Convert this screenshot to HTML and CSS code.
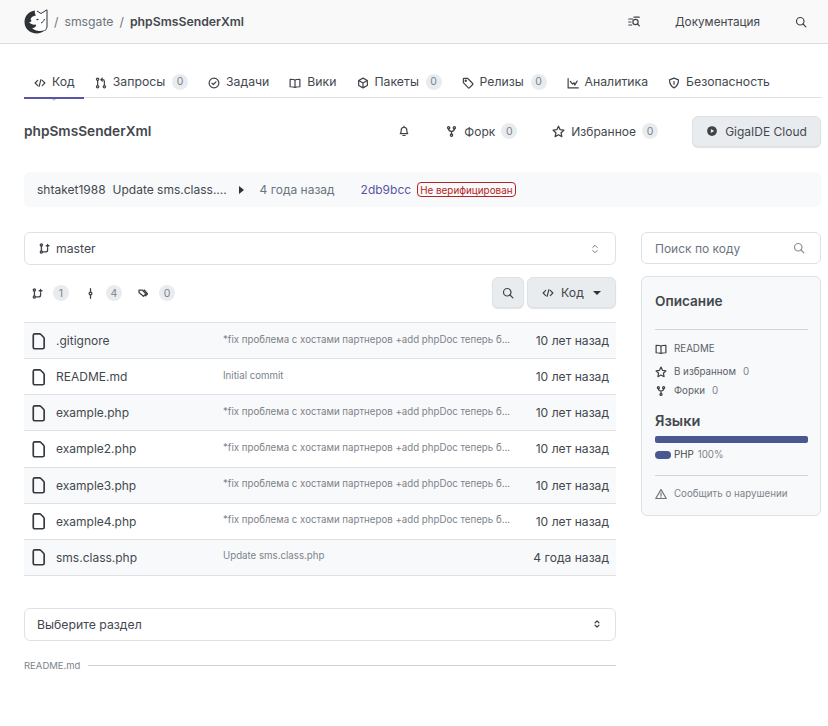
FILE: index.html
```html
<!DOCTYPE html>
<html>

<head>
    <title>phpSmsSenderXml</title>
    <meta name="viewport" content="width=device-width, initial-scale=1">
    <link rel="stylesheet" href="styles.css">
</head>

<body>
    <svg class="sprite">
        <symbol id="i-code" viewBox="0 0 16 16"><path d="M5 4.500 1.500 8 5 11.500M11 4.500 14.500 8 11 11.500M9.200 3.500 6.800 12.500"/></symbol>
        <symbol id="i-pull" viewBox="0 0 16 16"><circle cx="3.500" cy="3" r="1.600"/><circle cx="3.500" cy="13" r="1.600"/><circle cx="12.500" cy="13" r="1.600"/><path d="M3.500 4.600v6.800M12.500 11.400V6c0-1.500-.8-2.500-2.500-2.500H8M9.800 1.500 7.800 3.500l2 2"/></symbol>
        <symbol id="i-check" viewBox="0 0 16 16"><circle cx="8" cy="8" r="6.500"/><path d="M5.300 8.300 7.200 10l3.400-3.600"/></symbol>
        <symbol id="i-book" viewBox="0 0 16 16"><path d="M8 4.200C7 3.200 5.500 3 1.500 3v10c4 0 5.500.2 6.500 1 1-.8 2.500-1 6.500-1V3c-4 0-5.500.2-6.500 1.200ZM8 4.200V14"/></symbol>
        <symbol id="i-box" viewBox="0 0 16 16"><path d="M8 1.500 13.800 4.700v6.600L8 14.500l-5.800-3.200V4.700ZM2.400 4.800 8 8l5.600-3.200M8 8v6.300"/></symbol>
        <symbol id="i-tag" viewBox="0 0 16 16"><path d="M1.800 2.600c0-.5.4-.9.9-.9h4.600l7 7c.4.4.4 1 0 1.300l-4.500 4.500c-.4.4-1 .4-1.300 0l-6.700-7Z"/><circle cx="5" cy="5" r=".8"/></symbol>
        <symbol id="i-chart" viewBox="0 0 16 16"><path d="M1.500 2v12.500H15M4.500 6l3 3.500 2-1.800.8 2.800M13.500 5.500l-3.200 5.300"/></symbol>
        <symbol id="i-shield" viewBox="0 0 16 16"><path d="M8 1.500 14 3.800c0 5.200-2 8.800-6 10.700-4-1.900-6-5.500-6-10.700Z"/><path d="M8 6v3.500"/></symbol>
        <symbol id="i-bell" viewBox="0 0 16 16"><path d="M3 11.500c1-1 1.200-2.200 1.200-4.300C4.200 4.800 5.800 3 8 3s3.800 1.800 3.800 4.200c0 2.100.2 3.300 1.200 4.300ZM8 1.500V3M6.500 14h3"/></symbol>
        <symbol id="i-fork" viewBox="0 0 16 16"><circle cx="4.500" cy="3.500" r="1.400"/><circle cx="11.500" cy="3.500" r="1.400"/><circle cx="8" cy="12.500" r="1.400"/><path d="M4.500 5c0 2 1 2.800 3.500 3 2.500-.2 3.500-1 3.500-3M8 8v3"/></symbol>
        <symbol id="i-star" viewBox="0 0 16 16"><path d="m8 1.500 2 4.300 4.600.6-3.400 3.200.9 4.700L8 12l-4.100 2.300.9-4.700L1.400 6.400 6 5.800Z"/></symbol>
        <symbol id="i-search" viewBox="0 0 16 16"><circle cx="7" cy="7" r="5"/><path d="m10.700 10.700 3.800 3.800"/></symbol>
        <symbol id="i-branch" viewBox="0 0 16 16"><circle cx="3.500" cy="3" r="1.600"/><circle cx="3.500" cy="13" r="1.600"/><path d="M3.500 4.600v6.800M6.500 13h3c2 0 3-1 3-3V8M12.500 2v4M10.500 4h4"/></symbol>
        <symbol id="i-commit" viewBox="0 0 16 16"><circle cx="8" cy="8" r="2"/><path d="M8 1v5M8 10v5"/></symbol>
        <symbol id="i-tags" viewBox="0 0 16 16"><path d="M1.500 3h4.500l5.500 5.500-3.500 3.500-6.500-5.500ZM9 3l5 5.500-3 3"/></symbol>
        <symbol id="i-updown" viewBox="0 0 16 16"><path d="M5 6 8 3l3 3M5 10l3 3 3-3"/></symbol>
        <symbol id="i-file" viewBox="0 0 16 16"><path d="M2.900 3c0-.8.6-1.300 1.300-1.300h4.300c.5 0 .9.2 1.200.5l2.400 2.500c.3.3.5.7.5 1.200v7.700c0 .8-.6 1.300-1.300 1.300H4.200c-.7 0-1.300-.5-1.300-1.300Z"/></symbol>
        <symbol id="i-warn" viewBox="0 0 16 16"><path d="M8 2 15 14H1ZM8 6.500v3.500M8 11.800v.4"/></symbol>
    </svg>

    <header class="topbar">
        <div class="crumbs">
            <svg class="logo" viewBox="0 0 24 25">
                <path class="logo-white" d="M12 1 17 4 23 .5V18C21 23 15 25 11 24.500 5 24 .5 19 .5 12 .5 6 5 2 12 1Z"/>
                <path class="logo-dark" d="M11 1.500C5 2 .5 7 .5 13 .5 19 5 24 12 24.500 16 24.500 19 23 21 21 16 23 11 22 8 19 11 19 13 17 11.500 15.500 9 16 7 15 5 13.500 7 13 8 12 7 11 6 9.500 8 7 12 6.500 11 5 10.500 3 11 1.500Z"/>
                <ellipse class="logo-dark" cx="13.500" cy="10.500" rx="1.200" ry=".8"/>
                <path class="logo-line" d="M13 2 17 4.500 23 .8V18C22.500 20 21.500 21 20.500 22M17 14c1.500-.5 3-2 3.500-4"/>
            </svg>
            <span class="sep">/</span>
            <a class="owner">smsgate</a>
            <span class="sep">/</span>
            <b class="repo-link">phpSmsSenderXml</b>
        </div>
        <div class="top-actions">
            <svg class="ic ic-small" viewBox="0 0 16 16"><path d="M1 4h5M1 8h3M1 12h4"/><circle cx="10" cy="8" r="3.500"/><path d="m12.500 10.500 2.500 2.500M8 1.500h7"/></svg>
            <span class="docs">Документация</span>
            <svg class="ic"><use href="#i-search"/></svg>
        </div>
    </header>

    <nav class="tabs">
        <a class="tab active"><svg class="ic"><use href="#i-code"/></svg>Код</a>
        <a class="tab"><svg class="ic"><use href="#i-pull"/></svg>Запросы<span class="count">0</span></a>
        <a class="tab"><svg class="ic"><use href="#i-check"/></svg>Задачи</a>
        <a class="tab"><svg class="ic"><use href="#i-book"/></svg>Вики</a>
        <a class="tab"><svg class="ic"><use href="#i-box"/></svg>Пакеты<span class="count">0</span></a>
        <a class="tab"><svg class="ic"><use href="#i-tag"/></svg>Релизы<span class="count">0</span></a>
        <a class="tab"><svg class="ic"><use href="#i-chart"/></svg>Аналитика</a>
        <a class="tab"><svg class="ic"><use href="#i-shield"/></svg>Безопасность</a>
    </nav>

    <div class="repo-head">
        <h1>phpSmsSenderXml</h1>
        <div class="repo-actions">
            <svg class="ic bell"><use href="#i-bell"/></svg>
            <span class="repo-action fork"><svg class="ic"><use href="#i-fork"/></svg>Форк<span class="count">0</span></span>
            <span class="repo-action star"><svg class="ic"><use href="#i-star"/></svg>Избранное<span class="count">0</span></span>
            <button class="btn ide"><svg class="ic play" viewBox="0 0 16 16"><circle cx="8" cy="8" r="6.500"/><path class="play-tri" d="M6.500 5.300 11 8l-4.500 2.700Z"/></svg>GigaIDE Cloud</button>
        </div>
    </div>

    <div class="commit">
        <span>shtaket1988</span>
        <span class="commit-msg">Update sms.class....</span>
        <span class="caret-right"></span>
        <span class="muted">4 года назад</span>
        <a class="sha">2db9bcc</a>
        <span class="unverified">Не верифицирован</span>
    </div>

    <div class="layout">
        <main>
            <div class="select branch">
                <span class="select-label"><svg class="ic"><use href="#i-branch"/></svg>master</span>
                <svg class="ic updown"><use href="#i-updown"/></svg>
            </div>

            <div class="toolbar">
                <div class="stats">
                    <svg class="ic"><use href="#i-branch"/></svg><span class="count">1</span>
                    <svg class="ic"><use href="#i-commit"/></svg><span class="count">4</span>
                    <svg class="ic"><use href="#i-tags"/></svg><span class="count">0</span>
                </div>
                <div class="toolbar-btns">
                    <button class="btn btn-search"><svg class="ic"><use href="#i-search"/></svg></button>
                    <button class="btn btn-code"><svg class="ic"><use href="#i-code"/></svg>Код<span class="caret-down"></span></button>
                </div>
            </div>

            <div class="files">
                <div class="file odd"><svg class="ic file-ic"><use href="#i-file"/></svg><span class="file-name">.gitignore</span><span class="file-msg">*fix проблема с хостами партнеров +add phpDoc теперь б...</span><span class="file-age">10 лет назад</span></div>
                <div class="file"><svg class="ic file-ic"><use href="#i-file"/></svg><span class="file-name">README.md</span><span class="file-msg">Initial commit</span><span class="file-age">10 лет назад</span></div>
                <div class="file odd"><svg class="ic file-ic"><use href="#i-file"/></svg><span class="file-name">example.php</span><span class="file-msg">*fix проблема с хостами партнеров +add phpDoc теперь б...</span><span class="file-age">10 лет назад</span></div>
                <div class="file"><svg class="ic file-ic"><use href="#i-file"/></svg><span class="file-name">example2.php</span><span class="file-msg">*fix проблема с хостами партнеров +add phpDoc теперь б...</span><span class="file-age">10 лет назад</span></div>
                <div class="file odd"><svg class="ic file-ic"><use href="#i-file"/></svg><span class="file-name">example3.php</span><span class="file-msg">*fix проблема с хостами партнеров +add phpDoc теперь б...</span><span class="file-age">10 лет назад</span></div>
                <div class="file"><svg class="ic file-ic"><use href="#i-file"/></svg><span class="file-name">example4.php</span><span class="file-msg">*fix проблема с хостами партнеров +add phpDoc теперь б...</span><span class="file-age">10 лет назад</span></div>
                <div class="file odd"><svg class="ic file-ic"><use href="#i-file"/></svg><span class="file-name">sms.class.php</span><span class="file-msg">Update sms.class.php</span><span class="file-age">4 года назад</span></div>
            </div>

            <div class="select section">
                <span class="select-label">Выберите раздел</span>
                <svg class="ic updown tiny"><use href="#i-updown"/></svg>
            </div>

            <div class="readme-line"><span>README.md</span></div>
        </main>

        <aside>
            <div class="code-search"><span>Поиск по коду</span><svg class="ic"><use href="#i-search"/></svg></div>
            <div class="about">
                <h2>Описание</h2>
                <hr>
                <div class="about-row readme"><svg class="ic"><use href="#i-book"/></svg>README</div>
                <div class="about-row"><svg class="ic"><use href="#i-star"/></svg>В избранном<span class="num">0</span></div>
                <div class="about-row"><svg class="ic"><use href="#i-fork"/></svg>Форки<span class="num">0</span></div>
                <h3>Языки</h3>
                <div class="lang-bar"></div>
                <div class="lang"><span class="lang-dot"></span>PHP<span class="lang-pct">100%</span></div>
                <hr class="hr-report">
                <div class="about-row report"><svg class="ic"><use href="#i-warn"/></svg>Сообщить о нарушении</div>
            </div>
        </aside>
    </div>
</body>

</html>
```

FILE: styles.css
```css
* {
    box-sizing: border-box
}

body {
    font-family: Inter, "Noto Sans", sans-serif;
    font-size: 12.25px;
    color: #43484e;
    margin: 0;
    height: 726px;
    overflow: hidden;
    background: #fff;
}

.sprite {
    display: none;
}

.ic {
    width: 14px;
    height: 14px;
    flex: none;
    fill: none;
    stroke: #3e4349;
    stroke-width: 1.6;
    stroke-linecap: round;
    stroke-linejoin: round;
}

.count {
    display: inline-flex;
    align-items: center;
    justify-content: center;
    min-width: 16px;
    height: 16px;
    border-radius: 8px;
    background: #e9ecef;
    color: #7c838a;
    font-size: 10.5px;
}

.muted {
    color: #6c757d;
}

/* top bar */
.topbar {
    height: 44px;
    padding: 0 21px 0 24px;
    display: flex;
    justify-content: space-between;
    align-items: center;
    background: #f9f9f9;
    border-bottom: 1px solid #dcdcdc;
}

.crumbs {
    display: flex;
    align-items: center;
    gap: 6px;
}

.logo {
    width: 24px;
    height: 25px;
}

.logo-white {
    fill: #fff;
}

.logo-dark {
    fill: #2e3338;
}

.logo-line {
    fill: none;
    stroke: #2e3338;
    stroke-width: 1;
}

.owner {
    color: #6c757d;
}

.sep {
    color: #6c757d;
}

.repo-link {
    font-weight: 600;
}

.top-actions {
    display: flex;
    align-items: center;
    gap: 35px;
}

.docs {
    font-size: 11.75px;
}

.top-actions .ic {
    width: 12px;
    height: 12px;
}

/* tabs */
.tabs {
    margin: 22px 6px 0 24px;
    height: 32px;
    padding-left: 10px;
    display: flex;
    gap: 20px;
    align-items: flex-start;
    border-bottom: 1px solid #dee2e6;
}

.tab {
    position: relative;
    height: 31px;
    padding-top: 8px;
    display: flex;
    align-items: flex-start;
    gap: 6px;
    line-height: 16px;
}

.tab .ic {
    width: 12px;
    height: 12px;
    margin-top: 3px;
}

.tab .count {
    margin-left: .7px;
}

.tab.active::after {
    content: "";
    position: absolute;
    left: -10px;
    right: -9px;
    bottom: -2px;
    height: 2px;
    background: #5854a8;
}

/* small notch under the active tab */
.tab.active::before {
    content: "";
    position: absolute;
    left: 17px;
    bottom: -4px;
    width: 5px;
    height: 5px;
    background: #fff;
    border-right: 1px solid #b9b7dc;
    border-bottom: 1px solid #b9b7dc;
    transform: scaleY(.6) rotate(45deg);
}

/* repo head */
.repo-head {
    margin: 16px 7px 0 24px;
    height: 34px;
    display: flex;
    justify-content: space-between;
    align-items: center;
}

h1 {
    margin: 0;
    font-size: 13.7px;
    font-weight: 600;
}

.repo-actions {
    display: flex;
    align-items: center;
}

.repo-action {
    display: flex;
    align-items: center;
    gap: 6px;
    font-size: 12px;
}

.repo-action .ic {
    width: 13px;
    height: 13px;
}

.bell {
    width: 12px;
    height: 12px;
    margin-right: 35px;
}

.fork {
    margin-right: 35px;
}

.star {
    margin-right: 34px;
}

.btn {
    font: inherit;
    color: inherit;
    height: 31px;
    display: inline-flex;
    align-items: center;
    justify-content: center;
    background: #e9ecef;
    border: 1px solid #dee2e6;
    border-radius: 6px;
    box-shadow: 0 1px 1px rgba(0, 0, 0, .12);
}

.ide {
    width: 129px;
    gap: 7px;
    font-size: 12px;
}

.play {
    fill: #3e4349;
    stroke: none;
    width: 12px;
    height: 12px;
}

.play-tri {
    fill: #e9ecef;
}

/* last commit */
.commit {
    margin: 24px 7px 0 24px;
    height: 35px;
    padding-left: 13px;
    display: flex;
    align-items: center;
    font-size: 12px;
    white-space: nowrap;
    background: #f8f9fa;
    border-radius: 6px;
}

.commit-msg {
    margin-left: 7px;
    width: 126px;
}

.caret-right {
    width: 0;
    height: 0;
    border-top: 4px solid transparent;
    border-bottom: 4px solid transparent;
    border-left: 5px solid #2e3338;
    margin-right: 16px;
}

.sha {
    color: #5854a8;
    margin-left: 26px;
}

.unverified {
    margin-left: 6px;
    height: 15px;
    padding: 0 2px;
    display: flex;
    align-items: center;
    font-size: 9.9px;
    color: #b3261e;
    border: 1px solid #b3261e;
    border-radius: 4px;
}

/* columns */
.layout {
    margin: 25px 7px 0 24px;
    display: grid;
    grid-template-columns: 592px 180px;
    justify-content: space-between;
}

.select {
    height: 33px;
    padding: 0 14px;
    display: flex;
    justify-content: space-between;
    align-items: center;
    border: 1px solid #dee2e6;
    border-radius: 6px;
}

.select-label {
    display: flex;
    align-items: center;
    gap: 6px;
}

.branch .ic {
    width: 11px;
    height: 11px;
    stroke-width: 1.9;
}

.branch .updown {
    width: 12px;
    height: 12px;
    stroke: #6c757d;
    stroke-width: 1.3;
}

.toolbar {
    margin-top: 10px;
    height: 35px;
    display: flex;
    justify-content: space-between;
    align-items: center;
}

.stats {
    display: flex;
    align-items: center;
    padding-left: 8px;
    margin-top: 1px;
}

.stats .ic {
    width: 11px;
    height: 11px;
    margin-right: 10px;
    stroke-width: 1.9;
}

.stats .count {
    margin-right: 16px;
}

.toolbar-btns {
    display: flex;
    gap: 3px;
}

.btn-search {
    width: 32px;
}

.btn-code {
    width: 89px;
    gap: 7px;
}

.toolbar .btn .ic {
    width: 12px;
    height: 12px;
}

.caret-down {
    width: 0;
    height: 0;
    margin-left: 2px;
    border-left: 4px solid transparent;
    border-right: 4px solid transparent;
    border-top: 4px solid #2e3338;
}

/* files */
.files {
    margin-top: 12px;
    border-top: 1px solid #dee2e6;
}

.file {
    height: 36.15px;
    display: flex;
    align-items: center;
    border-bottom: 1px solid #dee2e6;
}

.file.odd {
    background: #f8f9fa;
}

.file-ic {
    width: 18px;
    height: 18px;
    margin-left: 6px;
    stroke: #343a40;
    stroke-width: 1.5;
}

.file-name {
    width: 167px;
    margin-left: 8px;
    font-size: 12px;
}

.file-msg {
    flex: 1;
    margin-top: -3px;
    font-size: 9.7px;
    color: #7c838a;
    white-space: nowrap;
}

.file-age {
    margin-right: 7px;
    font-size: 12.1px;
}

.section {
    margin-top: 32px;
    height: 33px;
    padding: 0 12px;
}

.tiny {
    width: 10px;
    height: 10px;
    stroke-width: 2;
    margin-right: 1px;
}

.readme-line {
    margin-top: 19px;
    display: flex;
    align-items: center;
    gap: 8px;
    font-size: 9.5px;
    color: #7c838a;
}

.readme-line::after {
    content: "";
    flex: 1;
    border-top: 1px solid #ced4da;
}

/* sidebar */
.code-search {
    height: 32px;
    padding: 0 15px 0 13px;
    display: flex;
    justify-content: space-between;
    align-items: center;
    font-size: 12px;
    color: #6c757d;
    border: 1px solid #dee2e6;
    border-radius: 6px;
}

.code-search .ic {
    width: 12px;
    height: 12px;
    stroke: #868e96;
}

.about {
    margin-top: 12px;
    height: 240px;
    padding: 16px 12px 0 13px;
    background: #f8f9fa;
    border: 1px solid #dee2e6;
    border-radius: 6px;
}

h2 {
    margin: 0;
    font-size: 13.6px;
    line-height: 17px;
    font-weight: 600;
}

hr {
    margin: 19px 0 0;
    border: 0;
    border-top: 1px solid #ced4da;
}

.about-row {
    height: 19px;
    display: flex;
    align-items: center;
    font-size: 9.75px;
    color: #5a6167;
}

.about-row .ic {
    width: 12px;
    height: 12px;
    margin-right: 7px;
}

.readme {
    margin-top: 9px;
    margin-bottom: 4px;
}

.num {
    margin-left: 7px;
    color: #7c838a;
}

h3 {
    margin: 12px 0 0;
    font-size: 14.5px;
    line-height: 18px;
    font-weight: 600;
}

.lang-bar {
    margin-top: 6px;
    height: 7px;
    border-radius: 2px;
    background: #49598f;
}

.lang {
    margin-top: 6px;
    display: flex;
    align-items: center;
    font-size: 9.75px;
}

.lang-dot {
    width: 16px;
    height: 8px;
    margin-right: 3px;
    border-radius: 4px;
    background: #49598f;
}

.lang-pct {
    margin-left: 4px;
    color: #7c838a;
}

.hr-report {
    margin-top: 15px;
}

.report {
    margin-top: 8px;
    color: #7c838a;
}

.report .ic {
    stroke: #6c757d;
}
```
